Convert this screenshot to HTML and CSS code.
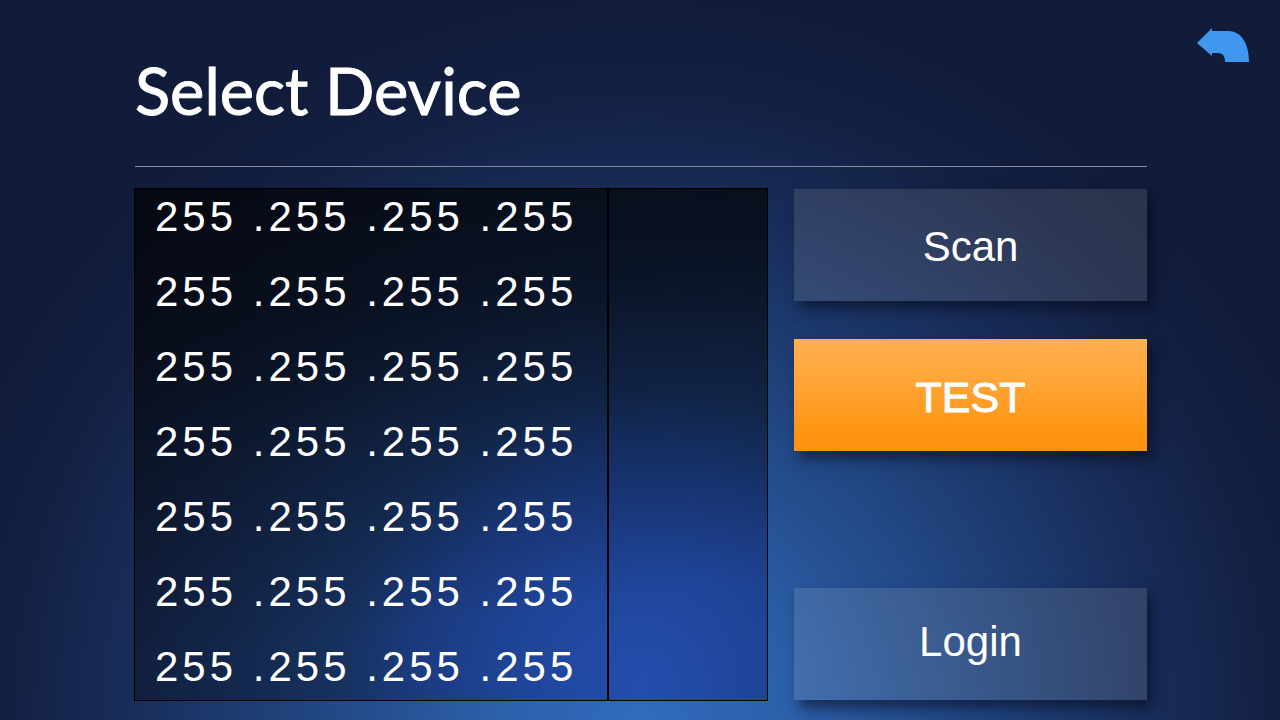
FILE: index.html
```html
<!DOCTYPE html>
<html lang="en">
<head>
<meta charset="utf-8">
<title>Select Device</title>
<link rel="stylesheet" href="styles.css">
</head>
<body>
<div class="screen">
  <header class="header">
    <h1 class="title">Select Device</h1>
    <button class="back" type="button" aria-label="Back">
      <svg viewBox="0 0 52 34" width="52" height="34" aria-hidden="true"><path fill="#4196f0" d="M0 15 15 0V3H31C44 3 52 15 52 34H28C28 28 26 25 20 25H15V28Z"/></svg>
    </button>
  </header>
  <main class="content">
    <table class="devices" aria-label="Devices">
      <colgroup><col class="col-address"><col class="col-status"></colgroup>
      <tbody>
        <tr><td>255 .255 .255 .255</td><td></td></tr>
        <tr><td>255 .255 .255 .255</td><td></td></tr>
        <tr><td>255 .255 .255 .255</td><td></td></tr>
        <tr><td>255 .255 .255 .255</td><td></td></tr>
        <tr><td>255 .255 .255 .255</td><td></td></tr>
        <tr><td>255 .255 .255 .255</td><td></td></tr>
        <tr><td>255 .255 .255 .255</td><td></td></tr>
      </tbody>
    </table>
    <div class="actions">
      <button class="btn" type="button">Scan</button>
      <button class="btn btn-primary" type="button">TEST</button>
      <button class="btn btn-login" type="button">Login</button>
    </div>
  </main>
</div>
</body>
</html>
```
FILE: styles.css
```css
* { box-sizing: border-box; }

body {
  margin: 0;
  background: #111c3a;
  color: #fff;
  font-family: "Liberation Sans", Arial, sans-serif;
}

.screen {
  min-height: 100vh;
  padding: 0 133px 19px 134px;
  background: radial-gradient(circle 720px at 50% 100%, #306bbd 0, #2c5fa9 150px, #265092 250px, #1f4078 370px, #192d5a 510px, #131f41 640px, #111c3a 720px);
}

.header {
  position: relative;
  margin-left: 1px;
  padding: 52px 0 38px;
  border-bottom: 1px solid #858c9f;
}

.title {
  margin: 0;
  font: 400 65px/76px Lato, sans-serif;
  -webkit-text-stroke: 1px #fff;
}

.back {
  position: absolute;
  top: 28px;
  right: -102px;
  padding: 0;
  border: 0;
  background: none;
  cursor: pointer;
}

.back svg { display: block; }

.content {
  display: grid;
  grid-template-columns: 634fr 353fr;
  gap: 26px;
  padding-top: 21px;
}

.devices {
  width: 100%;
  table-layout: fixed;
  border: 1px solid #000;
  border-spacing: 0;
  background:
    linear-gradient(172deg, rgba(0, 0, 0, 0.62) 0, rgba(0, 0, 0, 0.5) 25%, rgba(0, 0, 0, 0.25) 50%, rgba(0, 0, 0, 0) 80%),
    radial-gradient(circle 700px at 80% 97%, #234eae 0, #1f4497 130px, #1b3b80 220px, #17315f 300px, #13264a 420px, #111d3a 540px, #0d152b 700px);
}

.col-address { width: 75%; }

.devices td {
  height: 75px;
  padding: 0 0 25px 20px;
  font-size: 42px;
  line-height: 50px;
  letter-spacing: 4px;
  white-space: nowrap;
}

.devices td:first-child { border-right: 2px solid #000; }
.devices tr:first-child td { padding-top: 3px; }
.devices tr:last-child td { height: 58px; padding-bottom: 8px; }

.actions {
  display: flex;
  flex-direction: column;
  gap: 38px;
  padding: 1px 0;
}

.btn {
  height: 112px;
  padding: 4px 0 0;
  border: 0;
  background: rgba(255, 255, 235, 0.11);
  box-shadow: 6px 8px 12px rgba(5, 10, 25, 0.55);
  color: #fff;
  font: 42px/48px "Liberation Sans", Arial, sans-serif;
  cursor: pointer;
}

.btn-primary {
  background: linear-gradient(#ffb04f, #ffa63a 35%, #ff9411 85%, #ff920e);
  font-size: 43px;
  -webkit-text-stroke: 1px #fff;
}

.btn-login {
  margin-top: auto;
  padding: 0 0 4px;
}
```
